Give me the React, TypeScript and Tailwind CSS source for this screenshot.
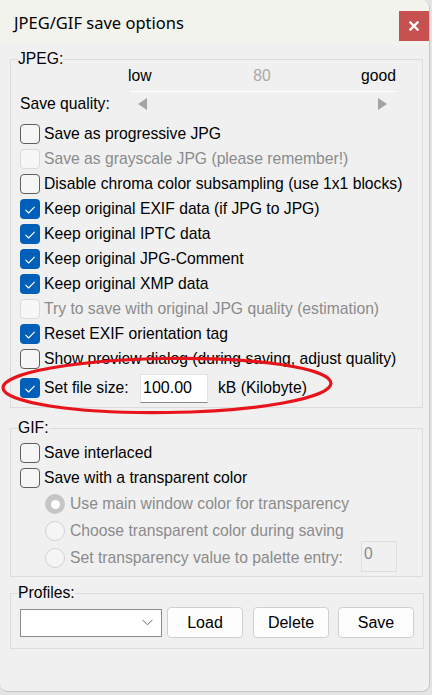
import type { ReactNode } from 'react'

type BoxState = 'on' | 'off' | 'disabled'

const sans = { fontFamily: '"Liberation Sans", Arial, sans-serif' }

function CheckBox({ state }: { state: BoxState }) {
  if (state === 'on') {
    return (
      <span className="flex h-[20px] w-[20px] shrink-0 items-center justify-center rounded-[4px] bg-[#005fb8]">
        <svg width="20" height="20" viewBox="0 0 20 20" fill="none">
          <path d="M5.8 11.2 L8.6 14 L14.4 8.2" stroke="#ffffff" strokeWidth="1.1" strokeLinecap="round" strokeLinejoin="round" />
        </svg>
      </span>
    )
  }
  if (state === 'disabled') {
    return <span className="h-[20px] w-[20px] shrink-0 rounded-[4px] border border-[#dadada] bg-[#f7f7f7]" />
  }
  return <span className="h-[20px] w-[20px] shrink-0 rounded-[4px] border border-[#5e5e5e] bg-[#f6f6f6]" />
}

function CheckRow({ state, children, muted }: { state: BoxState; children: ReactNode; muted?: boolean }) {
  return (
    <div className="flex h-[25px] items-center gap-[4px]">
      <CheckBox state={state} />
      <span className={muted ? 'text-[#8b8b8b]' : 'text-black'}>{children}</span>
    </div>
  )
}

function Radio({ selected }: { selected?: boolean }) {
  if (selected) {
    return (
      <span className="flex h-[20px] w-[20px] shrink-0 items-center justify-center rounded-full bg-[#c6c6c6]">
        <span className="h-[9px] w-[9px] rounded-full bg-white" />
      </span>
    )
  }
  return <span className="h-[20px] w-[20px] shrink-0 rounded-full border border-[#d2d2d2] bg-[#f5f5f5]" />
}

function Group({ label, className, children }: { label: string; className?: string; children: ReactNode }) {
  return (
    <fieldset className={`mx-[10px] w-[413px] border border-[#dcdcdc] px-[9px] ${className ?? ''}`}>
      <legend className="-ml-[2px] px-0 text-[15.7px] leading-[14px] text-black">{label}</legend>
      {children}
    </fieldset>
  )
}

function Btn({ children }: { children: ReactNode }) {
  return (
    <button className="flex h-[31px] w-[76px] items-center justify-center rounded-[4px] border border-[#d0d0d0] bg-[#fdfdfd] text-[16px] text-black">
      {children}
    </button>
  )
}

export default function App() {
  return (
    <div className="relative h-[695px] w-[432px] overflow-hidden bg-[#e4e4e4]" style={sans}>
      <div className="flex h-[692px] w-[430px] flex-col overflow-hidden rounded-r-[8px] rounded-bl-[8px] border-r border-b border-[#c6c6c6] bg-[#f0f0f0]">
        {/* title bar */}
        <div className="flex h-[45px] shrink-0 items-start justify-between bg-[#f3f3ee] pl-[14px] pt-[11px]">
          <span className="text-[16.5px] leading-[24px] text-black" style={{ fontFamily: '"Noto Sans", "Open Sans", sans-serif' }}>
            JPEG/GIF save options
          </span>
          <button className="flex h-[30px] w-[30px] items-center justify-center bg-[#c75050]">
            <svg width="10" height="10" viewBox="0 0 10 10">
              <path d="M1.5 1.5 L8.5 8.5 M8.5 1.5 L1.5 8.5" stroke="#ffffff" strokeWidth="2.4" strokeLinecap="square" />
            </svg>
          </button>
        </div>

        <div className="flex flex-col text-[15.7px]">
          {/* JPEG */}
          <Group label="JPEG:" className="mt-[7px] pb-[4px] pt-px">
            <div className="ml-[108px] grid h-[18px] w-[268px] grid-cols-3 items-center leading-[18px]">
              <span className="text-left">low</span>
              <span className="text-center text-[#a9a9a9]">80</span>
              <span className="text-right">good</span>
            </div>
            <div className="ml-[110px] mt-[6px] h-px w-[266px] bg-white" />
            <div className="mt-px flex h-[22px] items-center">
              <span className="w-[118px]">Save quality:</span>
              <svg width="9" height="12" viewBox="0 0 9 12">
                <path d="M9 0 L0 6 L9 12 Z" fill="#a3a3a3" />
              </svg>
              <span className="w-[231px]" />
              <svg width="9" height="12" viewBox="0 0 9 12">
                <path d="M0 0 L9 6 L0 12 Z" fill="#a3a3a3" />
              </svg>
            </div>
            <div className="mt-[6px] flex flex-col">
              <CheckRow state="off">Save as progressive JPG</CheckRow>
              <CheckRow state="disabled" muted>Save as grayscale JPG (please remember!)</CheckRow>
              <CheckRow state="off">Disable chroma color subsampling (use 1x1 blocks)</CheckRow>
              <CheckRow state="on">Keep original EXIF data (if JPG to JPG)</CheckRow>
              <CheckRow state="on">Keep original IPTC data</CheckRow>
              <CheckRow state="on">Keep original JPG-Comment</CheckRow>
              <CheckRow state="on">Keep original XMP data</CheckRow>
              <CheckRow state="disabled" muted>Try to save with original JPG quality (estimation)</CheckRow>
              <CheckRow state="on">Reset EXIF orientation tag</CheckRow>
              <CheckRow state="off">Show preview dialog (during saving, adjust quality)</CheckRow>
            </div>
            <div className="mt-[2px] flex h-[30px] items-center">
              <CheckBox state="on" />
              <span className="ml-[4px] w-[96px]">Set file size:</span>
              <span className="flex h-[29px] w-[68px] items-center border border-[#e3e3e3] border-b-[#8a8a8a] bg-white pl-[2px] text-[16px] text-black">
                100.00
              </span>
              <span className="ml-[10px]">kB (Kilobyte)</span>
            </div>
          </Group>

          {/* GIF */}
          <Group label="GIF:" className="mt-[13px] pb-[4px]">
            <div className="mt-[5px] flex flex-col">
              <CheckRow state="off">Save interlaced</CheckRow>
              <CheckRow state="off">Save with a transparent color</CheckRow>
            </div>
            <div className="flex flex-col pl-[25px] text-[#8b8b8b]">
              <div className="flex h-[28px] items-center gap-[5px]">
                <Radio selected />
                <span>Use main window color for transparency</span>
              </div>
              <div className="flex h-[26px] items-center gap-[5px]">
                <Radio />
                <span>Choose transparent color during saving</span>
              </div>
              <div className="flex h-[28px] items-center">
                <Radio />
                <span className="ml-[5px] w-[291px]">Set transparency value to palette entry:</span>
                <span className="-mt-[4px] flex h-[31px] w-[36px] items-start border border-[#dedede] bg-[#f0f0f0] pl-[2px] pt-[4px] leading-[16px] text-[#8b8b8b]">
                  0
                </span>
              </div>
            </div>
          </Group>

          {/* Profiles */}
          <Group label="Profiles:" className="mt-[9px] pb-[10px]">
            <div className="mt-[7px] flex h-[31px] items-center">
              <div className="flex h-[28px] w-[142px] items-center justify-end border border-[#8c8c8c] bg-white pr-[8px]">
                <svg width="11" height="7" viewBox="0 0 11 7" fill="none">
                  <path d="M0.5 0.8 L5.5 5.8 L10.5 0.8" stroke="#6a6a6a" strokeWidth="1" />
                </svg>
              </div>
              <div className="ml-[5px] flex gap-[10px]">
                <Btn>Load</Btn>
                <Btn>Delete</Btn>
                <div className="-ml-[1px]">
                  <Btn>Save</Btn>
                </div>
              </div>
            </div>
          </Group>
        </div>
      </div>

      {/* hand-drawn red ellipse annotation */}
      <svg className="pointer-events-none absolute left-0 top-0" width="432" height="695" viewBox="0 0 432 695">
        <ellipse cx="167" cy="385.5" rx="164" ry="27" fill="none" stroke="#e8141b" strokeWidth="3.2" transform="rotate(-0.8 167 385.5)" />
      </svg>
    </div>
  )
}
